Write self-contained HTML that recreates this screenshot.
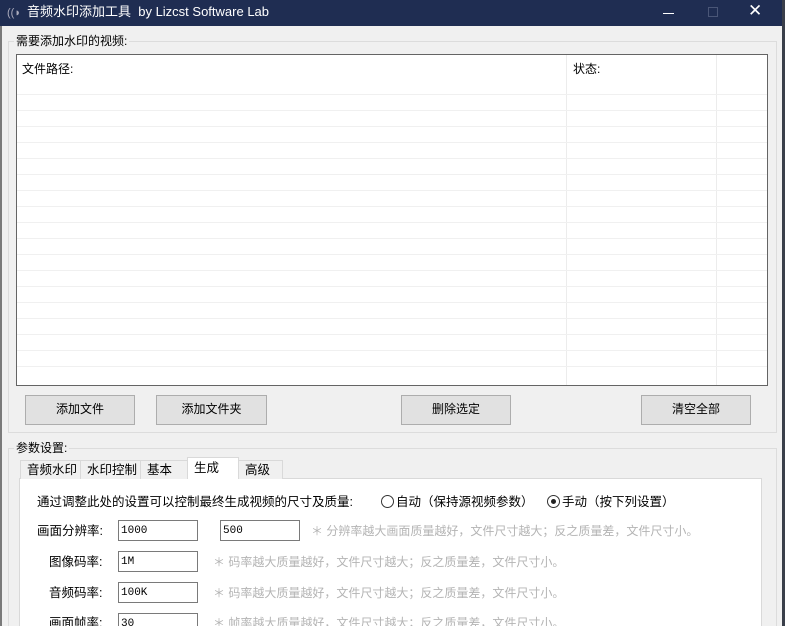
<!DOCTYPE html>
<html><head><meta charset="utf-8"><style>
*{margin:0;padding:0;box-sizing:border-box}
html,body{width:785px;height:626px;overflow:hidden}
body{background:#f0f0f0;font-family:"Liberation Sans","Noto Sans CJK SC",sans-serif;font-size:12px;color:#000;position:relative}
.a{position:absolute}
.title{left:0;top:0;width:782px;height:26px;background:#1f2d52;color:#fff;font-size:13px;line-height:24px;padding-left:27px}
.grp{border:1px solid #dcdcdc}
.lbl{background:#f0f0f0;padding:0 2px;line-height:14px}
.btn{background:#e1e1e1;border:1px solid #adadad;text-align:center;line-height:27px}
.row{left:17px;width:750px;height:1px;background:#f0f0f0}
.tab{top:460px;height:19px;border:1px solid #d9d9d9;border-bottom:none;background:#f0f0f0;line-height:18px;padding-left:6px;font-size:12.5px}
.inp{height:21px;border:1px solid #7a7a7a;background:#fff;font-family:"Liberation Mono",monospace;font-size:11px;line-height:21px;padding-left:2px}
.hint{color:#b4b4b4}
.rad{display:inline-block;width:13px;height:13px;border:1px solid #333;border-radius:50%;vertical-align:-2px;margin-right:2px;position:relative;background:#fff}
.rad.on:after{content:"";position:absolute;left:3px;top:3px;width:5px;height:5px;border-radius:50%;background:#222}
</style></head><body>
<div class="a title">音频水印添加工具&nbsp; by Lizcst Software Lab</div>
<div class="a" style="left:7px;top:7px;color:#aab;font-size:11px">((◗</div>
<div class="a" style="left:663px;top:13px;width:11px;height:1px;background:#fff"></div>
<div class="a" style="left:708px;top:7px;width:10px;height:10px;border:1px solid #4a5677"></div>
<div class="a" style="left:748px;top:1px;color:#fff;font-size:17px">✕</div>
<div class="a" style="left:782px;top:0;width:3px;height:626px;background:#3a3f4a"></div>
<div class="a" style="left:0;top:26px;width:2px;height:600px;background:#7a7a7a"></div>

<div class="a grp" style="left:8px;top:41px;width:769px;height:392px"></div>
<div class="a lbl" style="left:14px;top:34px">需要添加水印的视频:</div>
<div class="a" style="left:16px;top:54px;width:752px;height:332px;background:#fff;border:1px solid #646464"></div>
<div class="a" style="left:22px;top:60px">文件路径:</div>
<div class="a" style="left:573px;top:60px">状态:</div>
<div class="a" style="left:566px;top:55px;width:1px;height:330px;background:#ececec"></div>
<div class="a" style="left:716px;top:55px;width:1px;height:330px;background:#ececec"></div>
<div class="a row" style="top:94px"></div><div class="a row" style="top:110px"></div><div class="a row" style="top:126px"></div><div class="a row" style="top:142px"></div><div class="a row" style="top:158px"></div><div class="a row" style="top:174px"></div><div class="a row" style="top:190px"></div><div class="a row" style="top:206px"></div><div class="a row" style="top:222px"></div><div class="a row" style="top:238px"></div><div class="a row" style="top:254px"></div><div class="a row" style="top:270px"></div><div class="a row" style="top:286px"></div><div class="a row" style="top:302px"></div><div class="a row" style="top:318px"></div><div class="a row" style="top:334px"></div><div class="a row" style="top:350px"></div><div class="a row" style="top:366px"></div>
<div class="a btn" style="left:25px;top:395px;width:110px;height:30px">添加文件</div>
<div class="a btn" style="left:156px;top:395px;width:111px;height:30px">添加文件夹</div>
<div class="a btn" style="left:401px;top:395px;width:110px;height:30px">删除选定</div>
<div class="a btn" style="left:641px;top:395px;width:110px;height:30px">清空全部</div>

<div class="a grp" style="left:8px;top:448px;width:769px;height:190px"></div>
<div class="a lbl" style="left:14px;top:441px">参数设置:</div>
<div class="a" style="left:19px;top:478px;width:743px;height:160px;background:#fff;border:1px solid #d9d9d9"></div>
<div class="a tab" style="left:20px;width:61px">音频水印</div>
<div class="a tab" style="left:80px;width:61px">水印控制</div>
<div class="a tab" style="left:140px;width:48px">基本</div>
<div class="a tab" style="left:187px;top:457px;height:22px;width:52px;background:#fff;line-height:20px">生成</div>
<div class="a tab" style="left:238px;width:45px">高级</div>
<div class="a" style="left:37px;top:491px;font-size:12.5px">通过调整此处的设置可以控制最终生成视频的尺寸及质量:</div>
<div class="a" style="left:381px;top:491px;font-size:12.5px"><span class="rad"></span>自动（保持源视频参数）</div>
<div class="a" style="left:547px;top:491px;font-size:12.5px"><span class="rad on"></span>手动（按下列设置）</div>
<div class="a" style="left:37px;top:520px;font-size:12.5px">画面分辨率:</div>
<div class="a inp" style="left:118px;top:520px;width:80px">1000</div>
<div class="a inp" style="left:220px;top:520px;width:80px">500</div>
<div class="a hint" style="left:311px;top:522px">＊ 分辨率越大画面质量越好，文件尺寸越大；反之质量差，文件尺寸小。</div>
<div class="a" style="left:49px;top:551px;font-size:12.5px">图像码率:</div>
<div class="a inp" style="left:118px;top:551px;width:80px">1M</div>
<div class="a hint" style="left:213px;top:553px">＊ 码率越大质量越好，文件尺寸越大；反之质量差，文件尺寸小。</div>
<div class="a" style="left:49px;top:582px;font-size:12.5px">音频码率:</div>
<div class="a inp" style="left:118px;top:582px;width:80px">100K</div>
<div class="a hint" style="left:213px;top:584px">＊ 码率越大质量越好，文件尺寸越大；反之质量差，文件尺寸小。</div>
<div class="a" style="left:49px;top:612px;font-size:12.5px">画面帧率:</div>
<div class="a inp" style="left:118px;top:613px;width:80px">30</div>
<div class="a hint" style="left:213px;top:614px">＊ 帧率越大质量越好，文件尺寸越大；反之质量差，文件尺寸小。</div>
</body></html>
